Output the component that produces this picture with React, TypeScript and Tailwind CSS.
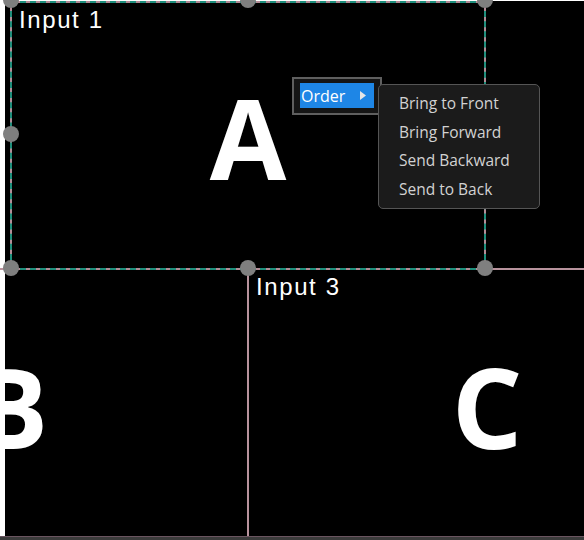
import React from "react";

function Handle({ x, y }: { x: number; y: number }) {
  return (
    <div
      className="absolute w-[16px] h-[16px] rounded-full bg-[#7f7f7f]"
      style={{ left: x - 8, top: y - 8 }}
    />
  );
}

const big = { fontFamily: '"Open Sans", "Liberation Sans", sans-serif' };
const label = { fontFamily: '"Liberation Sans", Arial, sans-serif' };
const menu = { fontFamily: '"Open Sans", "Noto Sans", sans-serif' };

function Letter({ ch }: { ch: string }) {
  return (
    <span className="text-[111px] leading-none font-bold text-white" style={big}>
      {ch}
    </span>
  );
}

function Label({ text }: { text: string }) {
  return (
    <div
      className="absolute left-[7px] top-[3px] text-[24px] leading-[28px] text-white tracking-[1.6px]"
      style={label}
    >
      {text}
    </div>
  );
}

export default function App() {
  return (
    <div className="relative w-[584px] h-[540px] overflow-hidden bg-white flex flex-col">
      <div className="h-[1px] shrink-0" />
      <div className="flex flex-1 min-h-0">
        <div className="w-[5px] shrink-0" />
        <div className="flex-1 bg-black" />
      </div>
      <div className="h-[4px] shrink-0 bg-[#3b3b3b] border-t border-[#6a5560]" />

      {/* Panel B */}
      <div className="absolute left-[-225px] top-[268px] w-[472px] h-[268px] border-t-2 border-[#b8939d] flex items-center justify-center pt-[6px]">
        <Letter ch="B" />
      </div>

      {/* Panel C / Input 3 */}
      <div className="absolute left-[247px] top-[268px] w-[478px] h-[268px] border-l-2 border-t-2 border-[#b8939d] flex items-center justify-center pt-[6px]">
        <Label text="Input 3" />
        <Letter ch="C" />
      </div>

      {/* Panel A / Input 1 (selected) */}
      <div className="absolute left-[10px] top-[1px] w-[476px] h-[269px] border-2 border-dashed border-[#1f8f7c] bg-[#b38c96]">
        <div className="relative w-full h-full bg-black flex items-center justify-center pt-[4px]">
          <Label text="Input 1" />
          <Letter ch="A" />
        </div>
      </div>

      <Handle x={11} y={0} />
      <Handle x={248} y={0} />
      <Handle x={485} y={0} />
      <Handle x={11} y={134} />
      <Handle x={485} y={134} />
      <Handle x={11} y={268} />
      <Handle x={248} y={268} />
      <Handle x={485} y={268} />

      {/* Context menu */}
      <div className="absolute left-[292px] top-[77px] w-[90px] h-[38px] border-2 border-[#5f5f5f] bg-[#151515] p-[4px_6px]">
        <div
          className="h-[25px] w-[74px] bg-[#1e86e6] flex items-center justify-between pl-[1px] pr-[8px] text-white text-[16px]"
          style={menu}
        >
          <span>Order</span>
          <svg width="6" height="9" viewBox="0 0 6 9">
            <path d="M0 0 L6 4.5 L0 9 Z" fill="#e6e6e6" />
          </svg>
        </div>
      </div>
      <div
        className="absolute left-[378px] top-[84px] w-[162px] h-[125px] rounded-[5px] border border-[#555555] bg-[#1b1b1b] flex flex-col pt-[4px] pl-[20px] text-[15.5px] text-[#d2d2d2]"
        style={menu}
      >
        <div className="h-[28.5px] leading-[28.5px]">Bring to Front</div>
        <div className="h-[28.5px] leading-[28.5px]">Bring Forward</div>
        <div className="h-[28.5px] leading-[28.5px]">Send Backward</div>
        <div className="h-[28.5px] leading-[28.5px]">Send to Back</div>
      </div>
    </div>
  );
}
